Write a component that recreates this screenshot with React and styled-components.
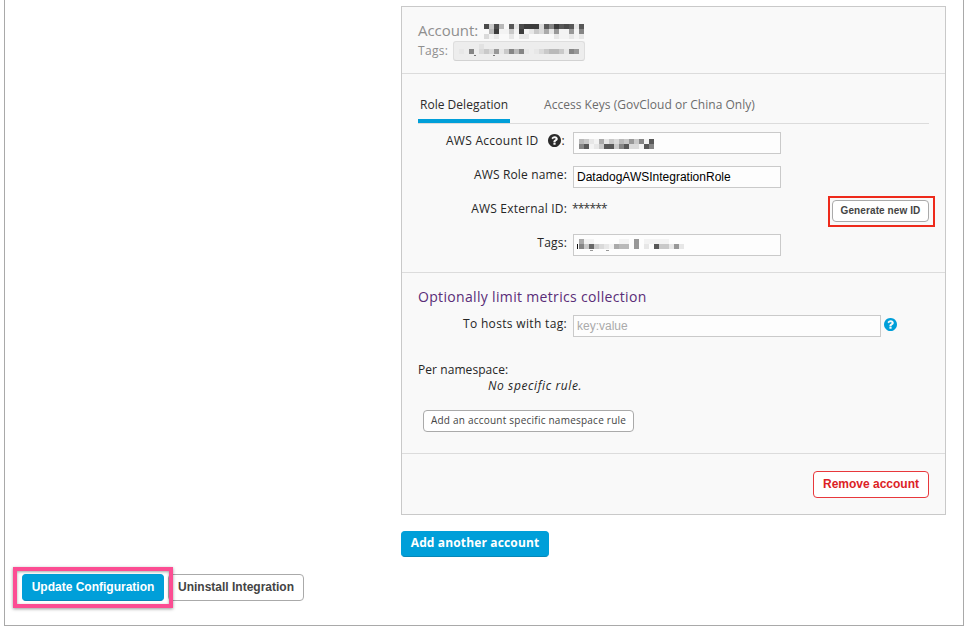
import React from 'react';
import styled, { createGlobalStyle, css } from 'styled-components';

const GlobalStyle = createGlobalStyle`
  *, *::before, *::after { box-sizing: border-box; }
  html, body { margin: 0; background: #fff; }
  body {
    font-family: 'Open Sans', 'Noto Sans', sans-serif;
    font-size: 12px;
    color: #333;
    overflow: hidden;
  }
`;

const arial = "'Liberation Sans', Arial, sans-serif";

const Page = styled.main`
  height: 629px;
  padding: 0 4px 3px;
`;

const Frame = styled.section`
  height: 626px;
  display: flex;
  flex-direction: column;
  border: solid #a9a9a9;
  border-width: 0 1px 1px;
`;

const AccountColumn = styled.div`
  width: 545px;
  margin: 6px 0 0 396px;
  display: flex;
  flex-direction: column;
  align-items: flex-start;
`;

const Panel = styled.div`
  width: 545px;
  height: 509px;
  border: 1px solid #c9c9c9;
  background: #f9f9f9;
`;

const Section = styled.div`
  height: ${(p) => p.$height}px;
  padding: 0 16px;
  border-bottom: 1px solid #dcdcdc;
`;

const AccountTitle = styled.div`
  display: flex;
  align-items: flex-start;
  gap: 6px;
  height: 34px;
  padding-top: 13px;
  font-size: 15px;
  line-height: 20px;
  letter-spacing: -0.05px;
  color: #8f8f8f;
  svg { margin-top: 4px; }
`;

const TagLine = styled.div`
  display: flex;
  gap: 5px;
  line-height: 20px;
  letter-spacing: 0.3px;
  color: #8f8f8f;
`;

const Chip = styled.span`
  width: 132px;
  height: 20px;
  padding: 7px 5px 0;
  line-height: 0;
  border: 1px solid #dedede;
  border-bottom-color: #d2d2d2;
  border-radius: 3px;
  background: #ededed;
`;

const Tabs = styled.div`
  height: 50px;
  margin-bottom: 8px;
  display: flex;
  gap: 32px;
  border-bottom: 1px solid #dcdcdc;
`;

const Tab = styled.div`
  height: 49px;
  padding: 21px 2px 0;
  line-height: 20px;
  white-space: nowrap;
  letter-spacing: 0.02px;
  color: ${(p) => (p.$active ? '#2b2b2b' : '#6c6c6c')};
  border-bottom: 4px solid ${(p) => (p.$active ? '#009fd9' : 'transparent')};
`;

const FieldRow = styled.div`
  display: grid;
  grid-template-columns: 149px 1fr auto;
  column-gap: 6px;
  align-items: start;
  height: 34px;
`;

const Label = styled.div`
  display: flex;
  justify-content: flex-end;
  align-items: center;
  height: 16px;
  padding-right: ${(p) => p.$inset ?? 0}px;
  white-space: nowrap;
  color: #262626;
  letter-spacing: ${(p) => p.$spacing ?? 0.2}px;
  svg { margin: 0 1px 0 9px; }
`;

const Input = styled.div`
  width: ${(p) => p.$width ?? 208}px;
  height: 22px;
  padding: 0 3px;
  border: 1px solid #cacaca;
  background: #fdfdfd;
  font: 12px/21px ${arial};
  color: ${(p) => (p.$placeholder ? '#aaa' : '#000')};
  ${(p) => p.$redacted && css`
    padding: ${p.$redacted};
    line-height: 0;
  `}
`;

const HostInput = styled.div`
  display: flex;
  align-items: center;
  gap: 3px;
  svg { margin-bottom: 3px; }
`;

const Secret = styled.span`
  margin-left: -1px;
  line-height: 18px;
  letter-spacing: -0.8px;
`;

const Button = styled.button`
  display: flex;
  align-items: center;
  justify-content: center;
  flex: none;
  width: ${(p) => p.$width}px;
  height: ${(p) => p.$height ?? 27}px;
  padding: 0 0 2px;
  border: 1px solid #aaa;
  border-radius: 4px;
  background: #fff;
  color: #444;
  font: bold 12px/1 ${arial};
  white-space: nowrap;
`;

const PrimaryButton = styled(Button)`
  border-color: #009fd9;
  border-bottom-color: #0787b7;
  background: #009fd9;
  color: #fff;
`;

const AddAccountButton = styled(PrimaryButton)`
  margin-top: 16px;
  font-family: 'Open Sans', sans-serif;
  letter-spacing: 0.14px;
`;

const DangerButton = styled(Button)`
  border-color: #e8383c;
  color: #dc2226;
`;

const GenerateButton = styled(Button)`
  position: relative;
  padding: 0;
  font-size: 10px;
  letter-spacing: 0.1px;
`;

const RuleButton = styled(Button)`
  margin: 16px 0 0 5px;
  padding-bottom: 3px;
  font: 10px/1 'Open Sans', sans-serif;
  letter-spacing: 0.23px;
`;

/* Outline drawn over the surrounding content to call a control out. */
const Callout = styled.span`
  position: absolute;
  inset: -5px -7px -6px -5px;
  border: 2px solid #ee2a1b;
  pointer-events: none;
`;

const PinkCallout = styled(Callout)`
  inset: -7px auto auto -9px;
  width: 160px;
  height: 41px;
  border: 4px solid #fc4d93;
  box-shadow: 0 1px 3px rgba(0, 0, 0, 0.4), inset 0 1px 3px rgba(0, 0, 0, 0.35);
`;

const Heading = styled.h2`
  height: 42px;
  margin: 0;
  padding-top: 14px;
  font-size: 14px;
  font-weight: 400;
  line-height: 20px;
  letter-spacing: 0.33px;
  color: #5a2d78;
`;

const Namespace = styled.div`
  margin-top: 13px;
  line-height: 16px;
  letter-spacing: 0.07px;
  color: #262626;
`;

const EmptyRule = styled.div`
  padding-left: 70px;
  font-style: italic;
  letter-spacing: 0.6px;
`;

const PanelFooter = styled.div`
  display: flex;
  justify-content: flex-end;
  padding: 17px 16px 0;
`;

const Actions = styled.div`
  position: relative;
  display: flex;
  gap: 4px;
  margin: 17px 0 0 17px;
`;

const shades = {
  2: '#333', 3: '#3c3c3c', 4: '#4b4b4b', 5: '#585858', 6: '#686868', 7: '#777', 8: '#858585',
  9: '#989898', a: '#aaa', b: '#b9b9b9', c: '#c9c9c9', d: '#dadada', e: '#e7e7e7', f: '#f3f3f3',
};

/* Pixelated text: each character is the shade of one 5px cell. */
function Mosaic({ rows, children }) {
  return (
    <svg width={rows[0].length * 5} height={rows.length * 5} shapeRendering="crispEdges" overflow="visible">
      {rows.flatMap((row, y) =>
        [...row].map((c, x) =>
          shades[c] ? <rect key={`${x}-${y}`} x={x * 5} y={y * 5} width="5" height="5" fill={shades[c]} /> : null
        )
      )}
      {children}
    </svg>
  );
}

function HelpIcon({ color, size = 13 }) {
  return (
    <svg width={size} height={size} viewBox="0 0 1536 1536" fill={color}>
      <path d="M896 1248v-192q0-14-9-23t-23-9H672q-14 0-23 9t-9 23v192q0 14 9 23t23 9h192q14 0 23-9t9-23zm256-672q0-88-55.500-163T958 297t-170-41q-243 0-371 213-15 24 8 42l132 100q7 6 19 6 16 0 25-12 53-68 86-92 34-24 86-24 48 0 85.500 26t37.500 59q0 38-20 61t-68 45q-63 28-115.500 86.500T640 892v36q0 14 9 23t23 9h192q14 0 23-9t9-23q0-19 21.500-49.500T972 829q32-18 49-28.500t46-35 44.500-48 28-60.500 12.500-81zm384 192q0 209-103 385.500T1153.500 1433 768 1536t-385.500-103T103 1153.500 0 768t103-385.500T382.500 103 768 0t385.500 103T1433 382.500 1536 768z" />
    </svg>
  );
}

export default function App() {
  return (
    <>
      <GlobalStyle />
      <Page>
        <Frame>
          <AccountColumn>
            <Panel>
              <Section $height={67}>
                <AccountTitle>
                  Account:
                  <Mosaic rows={['4c4b 5e4333d583545e5', ' b3ffcf3fecdae9ff9f8', 'dfe  e ee     effefe']} />
                </AccountTitle>
                <TagLine>
                  Tags:
                  <Chip>
                    <Mosaic rows={['e 8 dcd9ec8b8e edcbbce89']}>
                      <path d="M20-5h5v5h-5z" fill="#e2e2e2" />
                      <path d="M15 6h2v1h-2zM34 6h2v1h-2z" fill="#777" />
                    </Mosaic>
                  </Chip>
                </TagLine>
              </Section>

              <Section $height={199}>
                <Tabs>
                  <Tab $active>Role Delegation</Tab>
                  <Tab>Access Keys (GovCloud or China Only)</Tab>
                </Tabs>
                <FieldRow>
                  <Label $inset={2} $spacing={0.27}>
                    AWS Account ID <HelpIcon color="#2b2b2b" />:
                  </Label>
                  <Input $redacted="6px 5px">
                    <Mosaic rows={['bcefaecdbc9c8f5', '85fec55c85ddf58']} />
                  </Input>
                </FieldRow>
                <FieldRow>
                  <Label $spacing={0.15}>AWS Role name:</Label>
                  <Input>DatadogAWSIntegrationRole</Input>
                </FieldRow>
                <FieldRow>
                  <Label>AWS External ID:</Label>
                  <Secret>******</Secret>
                  <GenerateButton $width={97} $height={22}>
                    Generate new ID
                    <Callout />
                  </GenerateButton>
                </FieldRow>
                <FieldRow>
                  <Label>Tags:</Label>
                  <Input $redacted="4px 5px">
                    <Mosaic rows={['aff     ff 9 fffff   ', '8c6cdefabb 9 e 5cce9e']}>
                      <path d="M-1 5h-1v5h1z" fill="#111" />
                      <path d="M11 11h3v1h-3zM27 11h3v1h-3z" fill="#999" />
                    </Mosaic>
                  </Input>
                </FieldRow>
              </Section>

              <Section $height={181}>
                <Heading>Optionally limit metrics collection</Heading>
                <FieldRow>
                  <Label $spacing={0.33}>To hosts with tag:</Label>
                  <HostInput>
                    <Input $width={308} $placeholder>key:value</Input>
                    <HelpIcon color="#009fd9" />
                  </HostInput>
                </FieldRow>
                <Namespace>
                  Per namespace:
                  <EmptyRule>No specific rule.</EmptyRule>
                </Namespace>
                <RuleButton $width={211} $height={22}>Add an account specific namespace rule</RuleButton>
              </Section>

              <PanelFooter>
                <DangerButton $width={116}>Remove account</DangerButton>
              </PanelFooter>
            </Panel>
            <AddAccountButton $width={148} $height={26}>Add another account</AddAccountButton>
          </AccountColumn>

          <Actions>
            <PrimaryButton $width={142}>Update Configuration</PrimaryButton>
            <Button $width={136}>Uninstall Integration</Button>
            <PinkCallout />
          </Actions>
        </Frame>
      </Page>
    </>
  );
}
